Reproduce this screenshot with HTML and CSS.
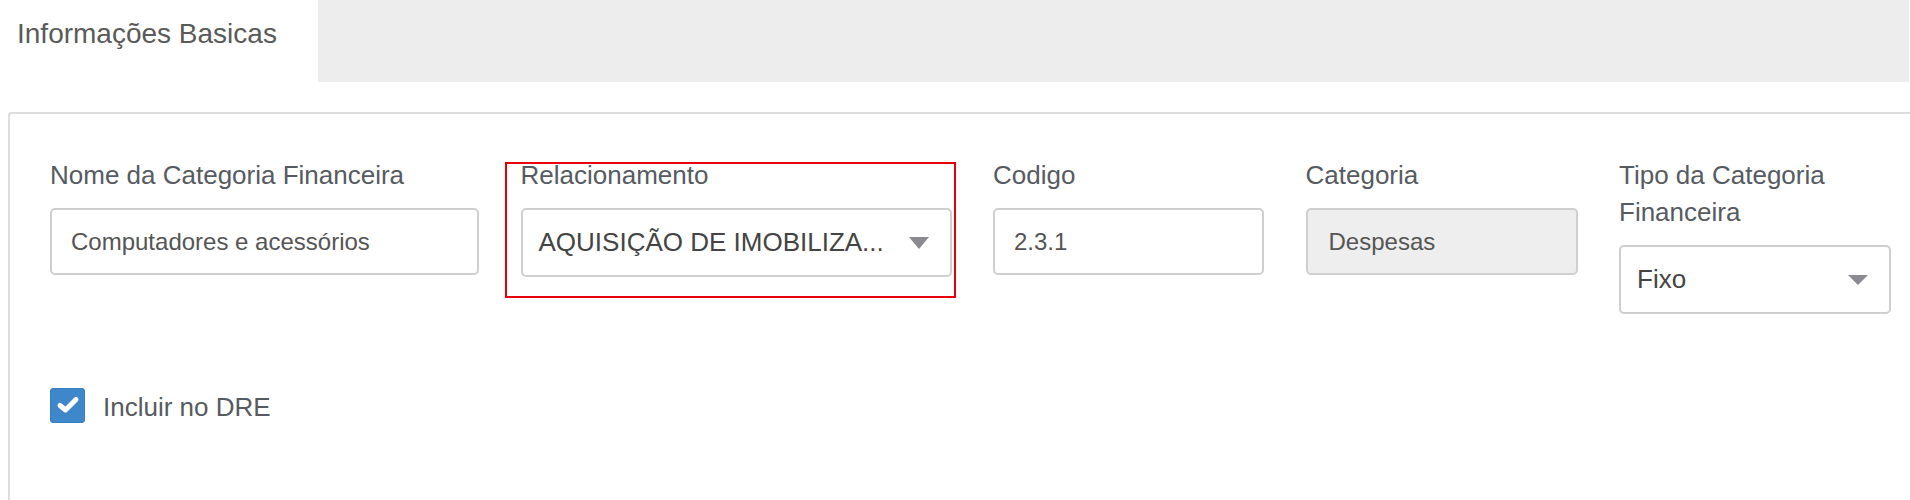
FILE: index.html
```html
<!DOCTYPE html>
<html lang="pt">
<head>
<meta charset="utf-8">
<title>Categoria Financeira</title>
<link rel="stylesheet" href="styles.css">
</head>
<body>
<nav class="tabs">
  <div class="tab active">Informações Basicas</div>
</nav>
<section class="panel">
  <div class="form-row">
    <div class="field">
      <label class="lbl">Nome da Categoria Financeira</label>
      <div class="input">Computadores e acessórios</div>
    </div>
    <div class="field highlighted">
      <label class="lbl">Relacionamento</label>
      <div class="select">
        <span class="select-text">AQUISIÇÃO DE IMOBILIZA...</span>
        <span class="caret"></span>
      </div>
    </div>
    <div class="field">
      <label class="lbl">Codigo</label>
      <div class="input">2.3.1</div>
    </div>
    <div class="field">
      <label class="lbl">Categoria</label>
      <div class="input disabled">Despesas</div>
    </div>
    <div class="field">
      <label class="lbl">Tipo da Categoria Financeira</label>
      <div class="select">
        <span class="select-text">Fixo</span>
        <span class="caret small"></span>
      </div>
    </div>
  </div>
  <div class="check-row">
    <span class="checkbox">
      <svg viewBox="0 0 35 35" width="35" height="35" aria-hidden="true">
        <polyline points="10,17.5 15.5,22 26,11.5" fill="none" stroke="#fff" stroke-width="5" stroke-linecap="round" stroke-linejoin="round"/>
      </svg>
    </span>
    <span class="check-label">Incluir no DRE</span>
  </div>
</section>
</body>
</html>
```

FILE: styles.css
```css
* { box-sizing: border-box; }

html, body {
  margin: 0;
  padding: 0;
  background: #fff;
  font-family: "Liberation Sans", Arial, sans-serif;
  overflow: hidden;
}

.tabs {
  display: flex;
  height: 82px;
  background: #ededed;
  margin-right: 1px;
}

.tab {
  width: 318px;
  padding: 14px 0 0 17px;
  font-size: 28px;
  line-height: 40px;
  color: #5a5a5a;
}

.tab.active {
  background: #fff;
}

.panel {
  margin: 30px 0 0 8px;
  border-top: 2px solid #ddd;
  border-left: 2px solid #ddd;
  border-top-left-radius: 4px;
  padding: 43px 0 0 40px;
  height: 388px;
}

.form-row {
  display: grid;
  grid-template-columns: 429px 431px 271px 272px 272px;
  column-gap: 41.5px;
  align-items: start;
}

.field {
  display: flex;
  flex-direction: column;
  position: relative;
}

.lbl {
  font-size: 26px;
  line-height: 37px;
  color: #565b61;
  margin-bottom: 14px;
}

.input {
  height: 67px;
  border: 2px solid #cfcfcf;
  border-radius: 5px;
  padding: 0 19px;
  display: flex;
  align-items: center;
  font-size: 24px;
  color: #555;
  background: #fff;
}

.input.disabled {
  background: #eee;
  padding-left: 21px;
}

.select {
  height: 69px;
  border: 2px solid #cfcfcf;
  border-radius: 5px;
  padding: 0 21px 0 16px;
  display: flex;
  align-items: center;
  justify-content: space-between;
  font-size: 26px;
  color: #444;
  background: #fff;
}

.caret {
  width: 0;
  height: 0;
  border-left: 10.5px solid transparent;
  border-right: 10.5px solid transparent;
  border-top: 12px solid #8a8a90;
}

.caret.small {
  border-left-width: 10px;
  border-right-width: 10px;
  border-top-width: 10px;
}

.highlighted::after {
  content: "";
  position: absolute;
  left: -16px;
  right: -4px;
  top: 5px;
  bottom: -21px;
  border: 2px solid #e8000b;
  pointer-events: none;
}

.check-row {
  display: flex;
  align-items: center;
  margin-top: 71px;
}

.checkbox {
  width: 35px;
  height: 35px;
  border-radius: 4px;
  background: #3e87cb;
  box-shadow: inset 0 0 0 1px #3a7fc0;
  display: inline-flex;
}

.check-label {
  margin-left: 18px;
  font-size: 26px;
  line-height: 37px;
  color: #565b61;
  padding-top: 4px;
}
```
